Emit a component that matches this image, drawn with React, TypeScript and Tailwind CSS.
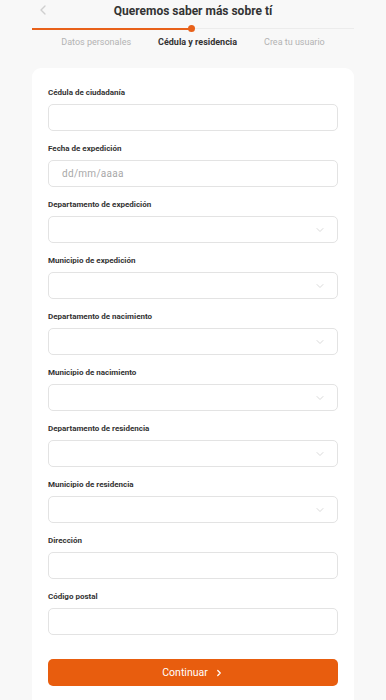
import { ChevronLeft, ChevronDown, ChevronRight } from "lucide-react";

const fields = [
  { label: "Cédula de ciudadanía", kind: "text" },
  { label: "Fecha de expedición", kind: "date" },
  { label: "Departamento de expedición", kind: "select" },
  { label: "Municipio de expedición", kind: "select" },
  { label: "Departamento de nacimiento", kind: "select" },
  { label: "Municipio de nacimiento", kind: "select" },
  { label: "Departamento de residencia", kind: "select" },
  { label: "Municipio de residencia", kind: "select" },
  { label: "Dirección", kind: "text" },
  { label: "Código postal", kind: "text" },
];

export default function App() {
  return (
    <div className="min-h-[700px] w-full bg-[#f8f8f8] font-['Roboto','Liberation_Sans',sans-serif]">
      <div className="relative flex h-[22px] items-center justify-center">
        <ChevronLeft className="absolute left-[35px] top-[2px] h-[16px] w-[16px] text-[#cfcfcf]" strokeWidth={2} />
        <h1 className="text-[12px] font-bold leading-[22px] text-[#333333]">Queremos saber más sobre tí</h1>
      </div>

      <div className="mx-[32px] mt-[3px] flex items-center">
        <div className="h-[2px] w-[158px] bg-[#e8611a]" />
        <div className="-ml-[2px] h-[7px] w-[7px] rounded-full bg-[#e8611a]" />
        <div className="h-[1px] flex-1 bg-[#ececec]" />
      </div>

      <div className="mt-[4px] flex justify-center gap-[27px] text-[9px] leading-[12px]">
        <span className="text-[#b3b3b3]">Datos personales</span>
        <span className="font-bold text-[#333333]">Cédula y residencia</span>
        <span className="text-[#b3b3b3]">Crea tu usuario</span>
      </div>

      <div className="mx-[32px] mt-[20px] rounded-[9px] bg-white px-[16px] pb-[30px] pt-[20px]">
        <div className="flex flex-col gap-[13px]">
          {fields.map((f) => (
            <div key={f.label}>
              <label className="block text-[8px] font-bold leading-[10px] text-[#333333]">{f.label}</label>
              <div className="mt-[6px] flex h-[27px] items-center justify-between rounded-[5px] border border-[#e3e3e3] bg-white px-[13px]">
                {f.kind === "date" && (
                  <span className="text-[10px] tracking-[0.3px] text-[#a8a8a8]">dd/mm/aaaa</span>
                )}
                {f.kind === "select" && (
                  <ChevronDown className="ml-auto -mr-[2px] h-[12px] w-[12px] text-[#cccccc]" strokeWidth={1.5} />
                )}
              </div>
            </div>
          ))}
        </div>

        <button className="mt-[24px] flex h-[27px] w-full items-center justify-center gap-[6px] rounded-[5px] bg-[#e85d0e] text-[10.5px] text-white">
          Continuar
          <ChevronRight className="h-[10px] w-[10px]" strokeWidth={3} />
        </button>
      </div>
    </div>
  );
}
